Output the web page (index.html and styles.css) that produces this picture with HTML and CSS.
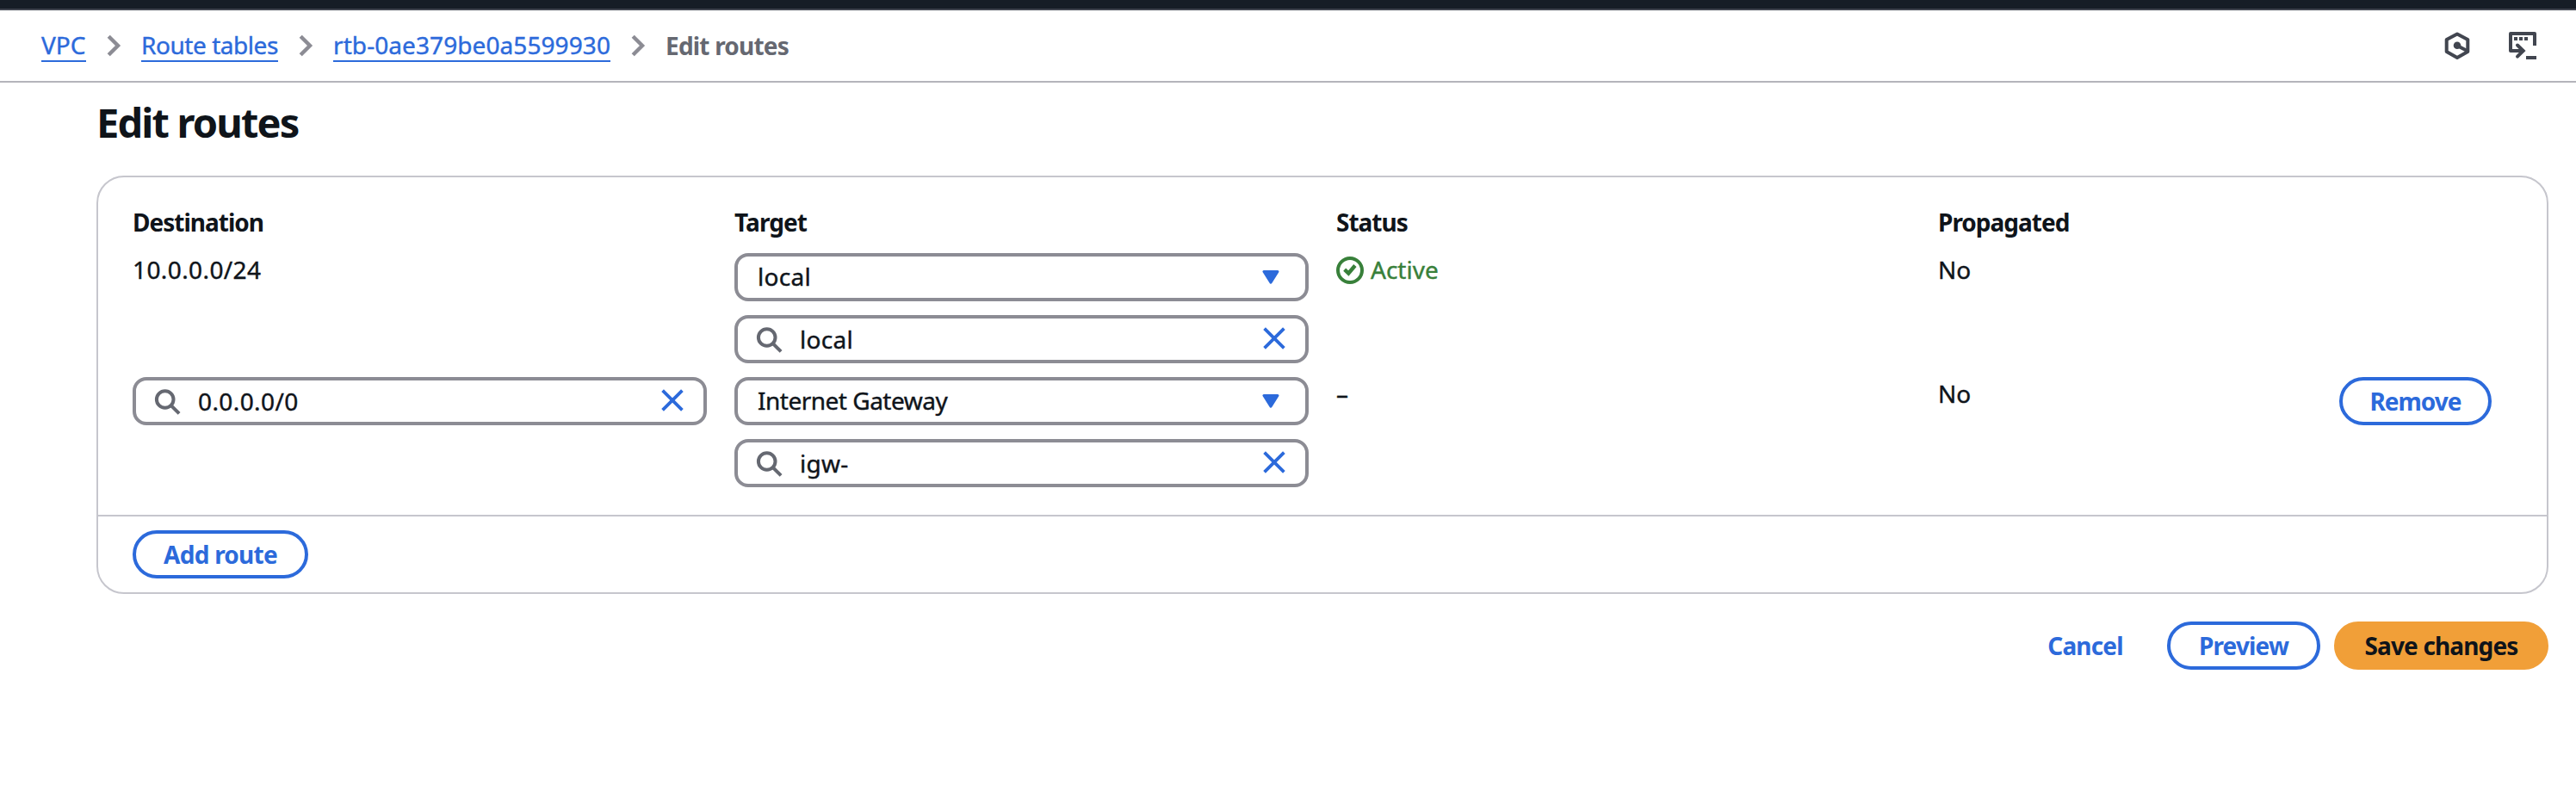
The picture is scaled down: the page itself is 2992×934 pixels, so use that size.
FILE: index.html
```html
<!DOCTYPE html>
<html lang="en">
<head>
<meta charset="utf-8">
<title>Edit routes</title>
<link rel="stylesheet" href="styles.css">
</head>
<body>
<svg class="sprite" aria-hidden="true">
  <symbol id="chevron" viewBox="0 0 32 32"><path d="M10.2 5.2 21 16 10.2 26.8" fill="none" stroke="currentColor" stroke-width="4.4"/></symbol>
  <symbol id="search" viewBox="0 0 32 32"><g fill="none" stroke="currentColor" stroke-width="4"><circle cx="13.7" cy="14" r="9.8"/><path d="m20.5 20.8 9.6 9.6"/></g></symbol>
  <symbol id="close" viewBox="0 0 32 32"><path d="m4.6 3.6 22.8 22.8M27.4 3.6 4.6 26.4" fill="none" stroke="currentColor" stroke-width="3.8"/></symbol>
  <symbol id="caret" viewBox="0 0 20 16"><path d="M2 1.5h16L10 14.2Z" fill="currentColor" stroke="currentColor" stroke-width="3" stroke-linejoin="round"/></symbol>
</svg>

<div class="topnav"></div>
<header class="toolbar">
  <nav class="crumbs">
    <a class="crumb link-vpc">VPC</a>
    <svg class="icon sep"><use href="#chevron"/></svg>
    <a class="crumb link-tables">Route tables</a>
    <svg class="icon sep"><use href="#chevron"/></svg>
    <a class="crumb link-id">rtb-0ae379be0a5599930</a>
    <svg class="icon sep"><use href="#chevron"/></svg>
    <span class="crumb-current">Edit routes</span>
  </nav>
  <div class="tools">
    <svg class="icon" viewBox="0 0 32 32"><path d="M16 2.4 28.3 8.9V23L16 29.9 3.7 23V8.9Z" fill="none" stroke="currentColor" stroke-width="4" stroke-linejoin="round"/><circle cx="16" cy="15.8" r="4.3" fill="currentColor"/><path d="m16 16 11.5 6" stroke="currentColor" stroke-width="4"/></svg>
    <svg class="icon" viewBox="0 0 32 32"><path d="M30 16V2H2v20h15.5" fill="none" stroke="currentColor" stroke-width="4" stroke-linejoin="round"/><path d="m10 15.5 6.7 6.5-6.7 6.6" fill="none" stroke="currentColor" stroke-width="4" stroke-linecap="round"/><path d="M20 28h12v4H20zM6 6h4v4H6zM12 6h4v4h-4zM18 6h4v4h-4z" fill="currentColor"/></svg>
  </div>
</header>

<main class="page">
  <h1 class="title">Edit routes</h1>
  <section class="card">
    <div class="routes">
      <div class="head">Destination</div>
      <div class="head head-target">Target</div>
      <div class="head">Status</div>
      <div class="head">Propagated</div>

      <div class="value cidr">10.0.0.0/24</div>
      <div class="stack">
        <div class="field"><span class="select-text short">local</span><svg class="caret"><use href="#caret"/></svg></div>
        <div class="field"><svg class="icon glass"><use href="#search"/></svg><span class="input-text short">local</span><svg class="icon clear"><use href="#close"/></svg></div>
      </div>
      <div class="value status"><svg class="icon" viewBox="0 0 32 32"><g fill="none" stroke="currentColor"><circle cx="16" cy="16" r="14" stroke-width="4"/><path d="m9.7 15.2 4.6 4.3 7.6-9" stroke-width="4.4"/></g></svg><span>Active</span></div>
      <div class="value">No</div>

      <div><div class="field"><svg class="icon glass"><use href="#search"/></svg><span class="input-text cidr">0.0.0.0/0</span><svg class="icon clear"><use href="#close"/></svg></div></div>
      <div class="stack">
        <div class="field"><span class="select-text">Internet Gateway</span><svg class="caret"><use href="#caret"/></svg></div>
        <div class="field"><svg class="icon glass"><use href="#search"/></svg><span class="input-text short">igw-</span><svg class="icon clear"><use href="#close"/></svg></div>
      </div>
      <div class="value">–</div>
      <div class="last"><span class="value">No</span><button class="btn remove">Remove</button></div>
    </div>
    <div class="card-footer"><button class="btn add">Add route</button></div>
  </section>
  <div class="actions">
    <button class="btn cancel">Cancel</button>
    <button class="btn preview">Preview</button>
    <button class="btn save">Save changes</button>
  </div>
</main>
</body>
</html>
```
FILE: styles.css
```css
* { box-sizing: border-box; }
body {
  margin: 0;
  min-height: 934px;
  background: #fff;
  color: #0f141a;
  font: 28px/38px "Noto Sans", "Open Sans", sans-serif;
}
.sprite { display: none; }
.icon { width: 32px; height: 32px; flex: none; display: block; }

.topnav { height: 12px; background: #161d26; border-bottom: 2px solid #424650; }
.toolbar {
  height: 84px;
  padding: 0 46px 0 48px;
  display: flex;
  justify-content: space-between;
  align-items: center;
  border-bottom: 2px solid #b4b4bb;
}
.crumbs { display: flex; align-items: center; }
.crumb {
  color: #2c6adb;
  line-height: 36px;
  height: 38px;
  border-bottom: 2px solid #2c6adb;
  white-space: nowrap;
}
.link-vpc { width: 52px; }
.link-tables { width: 159px; letter-spacing: -0.45px; }
.link-id { width: 322px; letter-spacing: 0.08px; }
.sep { margin: 0 16px; color: #8c8c94; }
.crumb-current { color: #656871; font-weight: 700; letter-spacing: -0.8px; line-height: 38px; }
.tools { display: flex; gap: 44px; color: #424650; }

/* Slightly sturdier regular-weight text */
.crumb, .value, .select-text, .input-text { -webkit-text-stroke: 0.4px currentColor; }

.page { padding: 0 32px 0 112px; }
.title {
  margin: 0;
  height: 108px;
  padding-top: 16px;
  font-size: 47px;
  line-height: 60px;
  letter-spacing: -1.85px;
}
.card { height: 486px; border: 2px solid #c6c6cd; border-radius: 32px; }
.routes {
  height: 392px;
  padding: 32px 32px 0 40px;
  display: grid;
  grid-template-columns: 667px 667px 667px 1fr;
  grid-template-rows: 40px 128px 128px;
  column-gap: 32px;
  row-gap: 16px;
}
.head { font-weight: 700; letter-spacing: -1px; line-height: 40px; }
.head-target { letter-spacing: -0.9px; }
.value { line-height: 38px; }
.cidr { letter-spacing: 0.4px; }
.short { letter-spacing: 0.3px; }
.status { height: 38px; display: flex; align-items: center; gap: 8px; color: #38803a; }
.status .icon { margin-top: 2px; }
.stack { display: grid; grid-template-rows: 56px 56px; gap: 16px; }
.field {
  height: 56px;
  border: 4px solid #8c8c94;
  border-radius: 16px;
  display: flex;
  align-items: center;
}
.select-text { flex: 1; padding-left: 23px; padding-bottom: 2px; }
.select-text:not(.short) { letter-spacing: -0.5px; }
.caret { width: 20px; height: 16px; margin-right: 30px; color: #2c6adb; }
.glass { margin-left: 20px; color: #656871; }
.input-text { flex: 1; padding-left: 20px; }
.clear { margin-right: 20px; color: #2c6adb; }

.last { display: flex; justify-content: space-between; align-items: flex-start; }
.btn {
  height: 56px;
  padding: 0;
  border: 4px solid #2c6adb;
  border-radius: 28px;
  background: none;
  color: #2c6adb;
  font: 700 28px/38px "Noto Sans", "Open Sans", sans-serif;
  letter-spacing: -0.85px;
  white-space: nowrap;
}
.remove { width: 177px; margin-right: 32px; letter-spacing: -1px; }
.add { width: 204px; letter-spacing: -0.75px; }
.card-footer { height: 90px; border-top: 2px solid #c6c6cd; padding: 16px 40px; }
.actions { margin-top: 32px; display: flex; justify-content: flex-end; gap: 16px; }
.cancel { width: 158px; border-color: transparent; }
.preview { width: 178px; }
.save { width: 249px; background: #f19f38; border-color: #f19f38; color: #0f141a; }
```
